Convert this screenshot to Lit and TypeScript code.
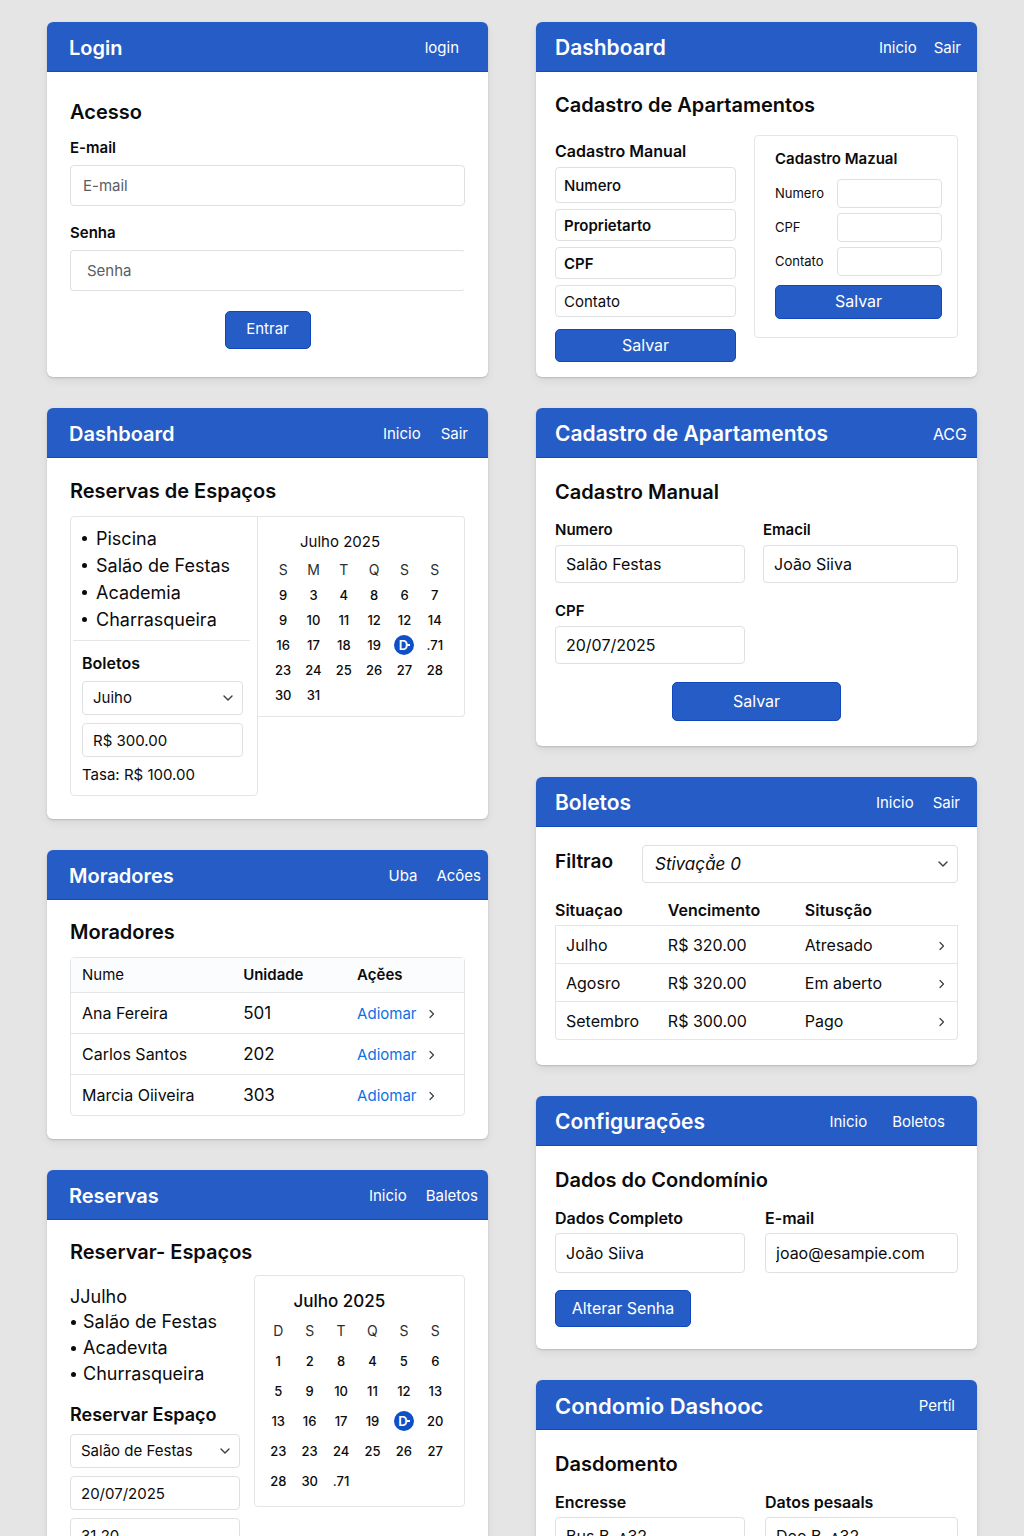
import { LitElement, html, css, svg, nothing } from "lit";
import { customElement, property } from "lit/decorators.js";

const base = css`
  * {
    box-sizing: border-box;
    margin: 0;
  }
  :host {
    font-family: Inter, "Liberation Sans", sans-serif;
    color: #0b0b0c;
  }
`;

const chevronDown = html`<svg class="chevron" viewBox="0 0 12 12" aria-hidden="true">
  ${svg`<path d="M2 4 L6 8 L10 4" fill="none" stroke="#3a3d42" stroke-width="1.4" stroke-linecap="round" stroke-linejoin="round"/>`}
</svg>`;

const chevronRight = html`<svg class="chevron-right" viewBox="0 0 8 10" aria-hidden="true">
  ${svg`<path d="M2 1.5 L5.5 5 L2 8.5" fill="none" stroke="#3a3d42" stroke-width="1.2" stroke-linecap="round" stroke-linejoin="round"/>`}
</svg>`;

@customElement("panel-card")
class PanelCard extends LitElement {
  @property() heading = "";
  @property({ attribute: false }) links: string[] = [];

  static styles = [
    base,
    css`
      :host {
        display: block;
        background: #fff;
        border-radius: 6px;
        box-shadow: 0 1px 2px rgba(0, 0, 0, 0.16), 0 4px 10px rgba(0, 0, 0, 0.06);
      }
      .bar {
        display: flex;
        align-items: center;
        justify-content: space-between;
        height: 50px;
        padding: 2px var(--nav-end, 16px) 0 var(--title-start, 22px);
        background: #255cc5;
        border-bottom: 1px solid #1549bd;
        border-radius: 6px 6px 0 0;
        color: #fff;
      }
      .title {
        font-size: var(--title-size, 20px);
        line-height: 28px;
        font-weight: 600;
        white-space: nowrap;
      }
      .nav {
        display: flex;
        gap: var(--nav-gap, 19px);
      }
      .link {
        color: #fff;
        font-size: var(--nav-size, 15px);
        line-height: 20px;
        text-decoration: none;
      }
    `,
  ];

  render() {
    return html`
      <header class="bar">
        <h2 class="title">${this.heading}</h2>
        <nav class="nav">${this.links.map((l) => html`<a class="link" href="#">${l}</a>`)}</nav>
      </header>
      <slot></slot>
    `;
  }
}

@customElement("month-calendar")
class MonthCalendar extends LitElement {
  @property({ attribute: false }) days: string[] = [];
  @property({ attribute: false }) weeks: string[][] = [];

  static styles = [
    base,
    css`
      :host {
        display: block;
      }
      .month {
        width: 100%;
        table-layout: fixed;
        border-collapse: collapse;
        text-align: center;
      }
      .caption {
        padding: 0 0 3px var(--caption-start, 32px);
        text-align: left;
        font-size: var(--caption-size, 15px);
        font-weight: var(--caption-weight, 400);
        line-height: 24px;
      }
      .weekday,
      .day {
        height: var(--row, 25px);
        padding: 0;
        line-height: 20px;
      }
      .weekday {
        font-size: 14px;
        font-weight: 400;
        color: #2c2e31;
      }
      .day {
        font-size: 13px;
        font-weight: 500;
      }
      .today {
        display: flex;
        align-items: center;
        justify-content: center;
        width: 20px;
        height: 20px;
        margin: 0 auto;
        border-radius: 50%;
        background: #0f50c8;
        color: #fff;
        font-weight: 600;
      }
      .today::after {
        content: "";
        width: 3px;
        height: 2px;
        margin-left: -1px;
        background: #fff;
      }
    `,
  ];

  render() {
    return html`
      <table class="month">
        <caption class="caption">Julho 2025</caption>
        <thead>
          <tr>${this.days.map((d) => html`<th class="weekday" scope="col">${d}</th>`)}</tr>
        </thead>
        <tbody>
          ${this.weeks.map(
            (w) => html`<tr>
              ${w.map((d) => html`<td class="day">${d === "D" ? html`<span class="today">D</span>` : d}</td>`)}
            </tr>`,
          )}
        </tbody>
      </table>
    `;
  }
}

@customElement("app-root")
class AppRoot extends LitElement {
  static styles = [
    base,
    css`
      :host {
        display: block;
        height: 100vh;
        overflow: auto;
        scrollbar-width: none;
        background: #e5e5e5;
      }
      .board {
        display: grid;
        grid-template-columns: 1fr 1fr;
        gap: 48px;
        padding: 22px 47px;
      }
      .column {
        display: flex;
        flex-direction: column;
        gap: 31px;
        min-width: 0;
      }
      .column.right {
        --title-start: 19px;
        --title-size: 21px;
      }
      .body {
        padding: 19px 23px 23px;
      }
      .right .body {
        padding: 20px 19px 25px;
      }
      .heading {
        font-size: 20px;
        line-height: 28px;
        font-weight: 600;
      }
      .subheading {
        font-size: 16px;
        line-height: 20px;
        font-weight: 600;
      }
      .label {
        display: block;
        font-size: 15px;
        line-height: 20px;
        font-weight: 600;
      }
      .input,
      .select {
        display: block;
        width: 100%;
        height: 38px;
        padding: 0 10px;
        border: 1px solid #dfe0e2;
        border-radius: 4px;
        background: #fff;
        color: #0b0b0c;
        font: 400 15px/20px Inter, "Liberation Sans", sans-serif;
        appearance: none;
        outline: none;
      }
      .input::placeholder {
        color: inherit;
        opacity: 1;
      }
      .picker {
        position: relative;
      }
      .picker .chevron {
        position: absolute;
        right: 9px;
        top: calc(50% - 6px);
        width: 12px;
        height: 12px;
        pointer-events: none;
      }
      .button {
        display: block;
        border: 1px solid #1248bd;
        border-radius: 5px;
        background: #255cc5;
        color: #fff;
        font: 400 16px/20px Inter, "Liberation Sans", sans-serif;
      }
      .panel {
        border: 1px solid #e4e5e7;
        border-radius: 4px;
      }
      .chevron-right {
        width: 8px;
        height: 10px;
        vertical-align: middle;
      }

      /* Login */
      .login {
        --nav-end: 29px;
      }
      .login .body {
        padding: 26px 23px 28px;
      }
      .login .input {
        height: 41px;
        margin: 7px 0 17px;
        padding: 0 12px;
        color: #5b5d61;
      }
      .login .label {
        margin-top: 12px;
      }
      .login .password {
        padding: 0 16px;
        border-right-color: transparent;
      }
      .login .button {
        width: 86px;
        height: 38px;
        margin: 20px auto 0;
        padding: 0 0 2px;
        font-size: 15px;
      }

      /* Apartment registration, two variants side by side */
      .register {
        --nav-gap: 17px;
      }
      .right .register .body {
        padding: 19px 19px 15px;
      }
      .variants {
        display: grid;
        grid-template-columns: 181fr 204fr;
        align-items: start;
        gap: 18px;
        margin-top: 16px;
      }
      .stacked {
        display: flex;
        flex-direction: column;
        gap: 6px;
        padding-top: 6px;
      }
      .stacked .input {
        height: 32px;
        padding: 0 8px;
      }
      .stacked .input.first {
        height: 36px;
        font-weight: 500;
      }
      .stacked .input.strong {
        font-weight: 600;
      }
      .stacked .button {
        height: 33px;
        margin-top: 6px;
        padding: 0 0 2px;
      }
      .inline {
        padding: 13px 15px 18px 20px;
      }
      .rows {
        display: grid;
        grid-template-columns: 62px 1fr;
        align-items: center;
        gap: 5px 0;
        margin: 10px 0 9px;
      }
      .rows .label {
        padding-bottom: 2px;
        font-size: 13px;
        font-weight: 400;
      }
      .rows .input {
        height: 29px;
      }
      .inline .button {
        width: 100%;
        height: 34px;
        padding: 0 0 2px;
      }

      /* Space reservations summary */
      .summary {
        --nav-end: 20px;
        --nav-gap: 20px;
      }
      .split {
        display: grid;
        grid-template-columns: 188fr 207fr;
        align-items: start;
        margin-top: 11px;
      }
      .aside {
        padding: 8px 0 10px;
        border-radius: 4px 0 4px 4px;
      }
      .month-box {
        padding: 13px 14px 9px 10px;
        border-left: 0;
        border-radius: 0 4px 4px 0;
      }
      .list {
        padding: 0 0 0 25px;
        font-size: 17px;
        line-height: 27px;
        list-style: none;
      }
      .item {
        display: flex;
        align-items: center;
        white-space: nowrap;
      }
      .item::before {
        content: "";
        width: 5px;
        height: 5px;
        margin: 0 9px 0 -14px;
        border-radius: 50%;
        background: #0b0b0c;
      }
      .bills {
        display: flex;
        flex-direction: column;
        gap: 8px;
        margin: 7px 7px 0 2px;
        padding: 12px 7px 0 9px;
        border-top: 1px solid #e4e5e7;
      }
      .bills .input,
      .bills .select {
        height: 34px;
      }
      .fee {
        font-size: 15px;
        line-height: 20px;
      }

      /* Two-column forms */
      .form {
        display: grid;
        grid-template-columns: 190fr 195fr;
        gap: 18px;
        margin-top: 14px;
      }
      .form.wide-gap {
        grid-template-columns: 190fr 193fr;
        gap: 20px;
      }
      .form.wide-gap .label {
        font-size: 16px;
      }
      .form .input {
        margin-top: 5px;
        font-size: 16px;
      }
      .manual {
        --nav-end: 10px;
        --nav-size: 16px;
      }
      .manual .button {
        width: 169px;
        height: 39px;
        margin: 18px auto 0;
        padding: 0 0 2px;
      }

      /* Residents */
      .residents {
        --nav-end: 7px;
      }
      .residents .body {
        padding-top: 18px;
      }
      .residents .table {
        margin-top: 11px;
      }
      .table {
        width: 100%;
        table-layout: fixed;
        border-collapse: separate;
        border-spacing: 0;
        text-align: left;
      }
      .people {
        border: 1px solid #e4e5e7;
        border-radius: 4px;
      }
      .people .cell {
        height: 41px;
        padding: 0 0 0 11px;
        border-top: 1px solid #e4e5e7;
        font-size: 16px;
        line-height: 20px;
      }
      .people .head {
        height: 34px;
        padding: 0 0 0 11px;
        background: #fbfcfd;
        font-size: 15px;
        line-height: 20px;
        font-weight: 600;
      }
      .people .head.plain {
        font-weight: 400;
      }
      .people .unit {
        font-size: 17px;
      }
      .name-col {
        width: 41%;
      }
      .unit-col {
        width: 29%;
      }
      .action {
        margin-right: 7px;
        color: #0b72e4;
        font-size: 15px;
        text-decoration: none;
      }

      /* Bills table */
      .billing {
        --nav-end: 17px;
      }
      .right .billing .body {
        padding-top: 18px;
      }
      .filter {
        display: grid;
        grid-template-columns: 87px 1fr;
        align-items: start;
      }
      .filter .label {
        padding-top: 5px;
        font-size: 19px;
        line-height: 24px;
      }
      .filter .select {
        padding: 0 12px;
        font-size: 17px;
        font-style: italic;
      }
      .invoices {
        margin-top: 16px;
      }
      .invoices .head {
        height: 26px;
        padding: 0 0 5px;
        font-size: 16px;
        line-height: 20px;
        font-weight: 600;
      }
      .invoices .cell {
        height: 38px;
        padding: 0;
        border-bottom: 1px solid #e4e5e7;
        font-size: 16px;
        line-height: 20px;
      }
      .invoices .row:first-child .cell {
        height: 39px;
        border-top: 1px solid #e4e5e7;
      }
      .invoices .cell:first-child {
        padding-left: 10px;
        border-left: 1px solid #e4e5e7;
      }
      .invoices .cell:last-child {
        padding-right: 11px;
        border-right: 1px solid #e4e5e7;
        text-align: right;
      }
      .invoices .row:last-child .cell:first-child {
        border-bottom-left-radius: 4px;
      }
      .invoices .row:last-child .cell:last-child {
        border-bottom-right-radius: 4px;
      }
      .month-col {
        width: 28%;
      }
      .due-col {
        width: 34%;
      }
      .go-col {
        width: 10%;
      }

      /* Settings */
      .settings {
        --nav-end: 32px;
        --nav-gap: 25px;
      }
      .right .settings .body {
        padding-bottom: 22px;
      }
      .settings .input {
        height: 40px;
      }
      .settings .button {
        width: 136px;
        height: 37px;
        margin-top: 17px;
        padding: 0 0 2px;
      }

      /* Reservation form */
      .reserve {
        --nav-end: 10px;
      }
      .reserve .body {
        padding-top: 18px;
      }
      .booking {
        display: grid;
        grid-template-columns: 170fr 212fr;
        align-items: start;
        gap: 14px;
        margin-top: 9px;
      }
      .booking .fields {
        display: flex;
        flex-direction: column;
        gap: 8px;
        margin-top: 17px;
      }
      .booking .input,
      .booking .select {
        height: 34px;
      }
      .booking .month-box {
        --row: 30px;
        --caption-start: 31px;
        --caption-size: 17px;
        --caption-weight: 500;
        padding: 13px 13px 10px 8px;
        border: 1px solid #e4e5e7;
        border-radius: 4px;
      }
      .lead {
        padding-top: 10px;
        font-size: 18px;
        line-height: 24px;
      }
      .booking .list {
        padding-left: 13px;
        line-height: 26px;
      }
      .summary .list,
      .booking .list {
        font-size: 18px;
      }
      .booking .item::before {
        margin: 0 7px 0 -12px;
      }
      .booking .subheading {
        font-size: 18px;
        line-height: 22px;
      }

      /* Condominium */
      .condo {
        --nav-end: 22px;
        --title-size: 22px;
      }
    `,
  ];

  private list(items: string[]) {
    return html`<ul class="list">${items.map((i) => html`<li class="item">${i}</li>`)}</ul>`;
  }

  private select(id: string, value: string, label?: string) {
    return html`<div class="picker">
      <select class="select" id=${id} aria-label=${label ?? nothing}><option>${value}</option></select>
      ${chevronDown}
    </div>`;
  }

  private field(id: string, label: string, value: string, type = "text") {
    return html`<div class="field">
      <label class="label" for=${id}>${label}</label>
      <input class="input" id=${id} type=${type} .value=${value} />
    </div>`;
  }

  render() {
    return html`
      <main class="board">
        <div class="column left">
          <panel-card class="login" heading="Login" .links=${["login"]}>
            <form class="body">
              <h3 class="heading">Acesso</h3>
              <label class="label" for="login-email">E-mail</label>
              <input class="input" id="login-email" type="email" placeholder="E-mail" />
              <label class="label" for="login-pass">Senha</label>
              <input class="input password" id="login-pass" type="password" placeholder="Senha" />
              <button class="button" type="button">Entrar</button>
            </form>
          </panel-card>

          <panel-card class="summary" heading="Dashboard" .links=${["Inicio", "Sair"]}>
            <div class="body">
              <h3 class="heading">Reservas de Espaços</h3>
              <div class="split">
                <section class="panel aside">
                  ${this.list(["Piscina", "Salão de Festas", "Academia", "Charrasqueira"])}
                  <div class="bills">
                    <h4 class="subheading">Boletos</h4>
                    ${this.select("bill-month", "Juiho", "Mês")}
                    <input class="input" type="text" aria-label="Valor" .value=${"R$ 300.00"} />
                    <p class="fee">Tasa: R$ 100.00</p>
                  </div>
                </section>
                <div class="panel month-box">
                  <month-calendar
                    .days=${["S", "M", "T", "Q", "S", "S"]}
                    .weeks=${[
                      ["9", "3", "4", "8", "6", "7"],
                      ["9", "10", "11", "12", "12", "14"],
                      ["16", "17", "18", "19", "D", ".71"],
                      ["23", "24", "25", "26", "27", "28"],
                      ["30", "31", "", "", "", ""],
                    ]}
                  ></month-calendar>
                </div>
              </div>
            </div>
          </panel-card>

          <panel-card class="residents" heading="Moradores" .links=${["Uba", "Acôes"]}>
            <div class="body">
              <h3 class="heading">Moradores</h3>
              <table class="table people">
                <colgroup>
                  <col class="name-col" />
                  <col class="unit-col" />
                  <col />
                </colgroup>
                <thead>
                  <tr>
                    <th class="head plain" scope="col">Nume</th>
                    <th class="head" scope="col">Unidade</th>
                    <th class="head" scope="col">Açěes</th>
                  </tr>
                </thead>
                <tbody>
                  ${[
                    ["Ana Fereira", "501"],
                    ["Carlos Santos", "202"],
                    ["Marcia Oiiveira", "303"],
                  ].map(
                    ([name, unit]) => html`<tr>
                      <td class="cell">${name}</td>
                      <td class="cell unit">${unit}</td>
                      <td class="cell"><a class="action" href="#">Adiomar</a> ${chevronRight}</td>
                    </tr>`,
                  )}
                </tbody>
              </table>
            </div>
          </panel-card>

          <panel-card class="reserve" heading="Reservas" .links=${["Inicio", "Baletos"]}>
            <div class="body">
              <h3 class="heading">Reservar- Espaços</h3>
              <div class="booking">
                <section>
                  <p class="lead">JJulho</p>
                  ${this.list(["Salão de Festas", "Acadevıta", "Churrasqueira"])}
                  <div class="fields">
                    <h4 class="subheading">Reservar Espaço</h4>
                    ${this.select("space", "Salão de Festas", "Espaço")}
                    <input class="input" type="text" aria-label="Data" .value=${"20/07/2025"} />
                    <input class="input" type="text" aria-label="Hora" .value=${"31.20"} />
                  </div>
                </section>
                <div class="month-box">
                  <month-calendar
                    .days=${["D", "S", "T", "Q", "S", "S"]}
                    .weeks=${[
                      ["1", "2", "8", "4", "5", "6"],
                      ["5", "9", "10", "11", "12", "13"],
                      ["13", "16", "17", "19", "D", "20"],
                      ["23", "23", "24", "25", "26", "27"],
                      ["28", "30", ".71", "", "", ""],
                    ]}
                  ></month-calendar>
                </div>
              </div>
            </div>
          </panel-card>
        </div>

        <div class="column right">
          <panel-card class="register" heading="Dashboard" .links=${["Inicio", "Sair"]}>
            <div class="body">
              <h3 class="heading">Cadastro de Apartamentos</h3>
              <div class="variants">
                <form class="stacked">
                  <h4 class="subheading">Cadastro Manual</h4>
                  <input class="input first" type="text" placeholder="Numero" aria-label="Numero" />
                  <input class="input strong" type="text" placeholder="Proprietarto" aria-label="Proprietarto" />
                  <input class="input strong" type="text" placeholder="CPF" aria-label="CPF" />
                  <input class="input" type="text" placeholder="Contato" aria-label="Contato" />
                  <button class="button" type="button">Salvar</button>
                </form>
                <form class="panel inline">
                  <h4 class="label">Cadastro Mazual</h4>
                  <div class="rows">
                    <label class="label" for="apt-number">Numero</label>
                    <input class="input" id="apt-number" type="text" />
                    <label class="label" for="apt-cpf">CPF</label>
                    <input class="input" id="apt-cpf" type="text" />
                    <label class="label" for="apt-contact">Contato</label>
                    <input class="input" id="apt-contact" type="text" />
                  </div>
                  <button class="button" type="button">Salvar</button>
                </form>
              </div>
            </div>
          </panel-card>

          <panel-card class="manual" heading="Cadastro de Apartamentos" .links=${["ACG"]}>
            <form class="body">
              <h3 class="heading">Cadastro Manual</h3>
              <div class="form">
                ${this.field("m-number", "Numero", "Salão Festas")}
                ${this.field("m-email", "Emacil", "João Siiva")}
                ${this.field("m-cpf", "CPF", "20/07/2025")}
              </div>
              <button class="button" type="button">Salvar</button>
            </form>
          </panel-card>

          <panel-card class="billing" heading="Boletos" .links=${["Inicio", "Sair"]}>
            <div class="body">
              <div class="filter">
                <label class="label" for="filter">Filtrao</label>
                ${this.select("filter", "Stivaçẳe 0")}
              </div>
              <table class="table invoices">
                <colgroup>
                  <col class="month-col" />
                  <col class="due-col" />
                  <col />
                  <col class="go-col" />
                </colgroup>
                <thead>
                  <tr>
                    <th class="head" scope="col">Situaçao</th>
                    <th class="head" scope="col">Vencimento</th>
                    <th class="head" scope="col">Situsção</th>
                    <td></td>
                  </tr>
                </thead>
                <tbody>
                  ${[
                    ["Julho", "R$ 320.00", "Atresado"],
                    ["Agosro", "R$ 320.00", "Em aberto"],
                    ["Setembro", "R$ 300.00", "Pago"],
                  ].map(
                    (r) => html`<tr class="row">
                      ${r.map((c) => html`<td class="cell">${c}</td>`)}
                      <td class="cell">${chevronRight}</td>
                    </tr>`,
                  )}
                </tbody>
              </table>
            </div>
          </panel-card>

          <panel-card class="settings" heading="Configuraçōes" .links=${["Inicio", "Boletos"]}>
            <form class="body">
              <h3 class="heading">Dados do Condomínio</h3>
              <div class="form wide-gap">
                ${this.field("s-name", "Dados Completo", "João Siiva")}
                ${this.field("s-email", "E-mail", "joao@esampie.com", "email")}
              </div>
              <button class="button" type="button">Alterar Senha</button>
            </form>
          </panel-card>

          <panel-card class="condo" heading="Condomio Dashooc" .links=${["Pertíl"]}>
            <form class="body">
              <h3 class="heading">Dasdomento</h3>
              <div class="form wide-gap">
                ${this.field("c-address", "Encresse", "Bus B. ʌ32")}
                ${this.field("c-data", "Datos pesaals", "Deo B. ʌ32")}
              </div>
            </form>
          </panel-card>
        </div>
      </main>
    `;
  }
}
